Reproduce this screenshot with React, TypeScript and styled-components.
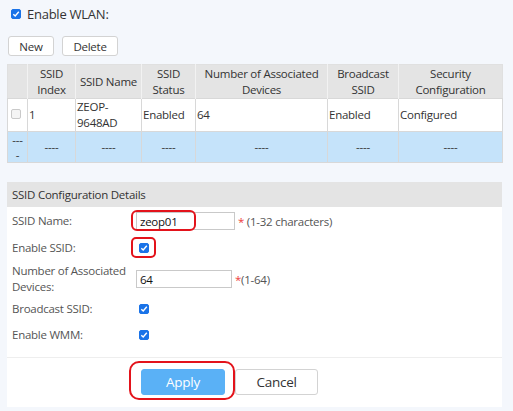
import React from "react";
import styled, { createGlobalStyle } from "styled-components";

const Global = createGlobalStyle`
  html, body { margin: 0; padding: 0; background: #f4f7fc; }
  body { font-family: "Open Sans", "Noto Sans", sans-serif; color: #333; letter-spacing: -0.25px; }
  * { box-sizing: border-box; }
`;

const Page = styled.div`
  width: 513px;
  height: 411px;
  padding: 0 11px 0 7px;
  overflow: hidden;
`;

const WlanRow = styled.label`
  display: flex;
  align-items: center;
  gap: 6px;
  height: 27px;
  padding: 0 0 0 4px;
  font-size: 13px;
  color: #333;
`;

const Box = styled.span<{ $on?: boolean }>`
  display: inline-flex;
  align-items: center;
  justify-content: center;
  flex: none;
  width: 10px;
  height: 10px;
  border-radius: 2px;
  background: ${(p) => (p.$on ? "#1a73e8" : "#f4f4f4")};
  border: 1px solid ${(p) => (p.$on ? "#1a73e8" : "#c9c9c9")};
`;

const Check = ({ on = true }: { on?: boolean }) => (
  <Box $on={on}>
    {on && (
      <svg width="8" height="8" viewBox="0 0 8 8">
        <path d="M1.3 4.2 L3.2 6 L6.8 1.8" fill="none" stroke="#fff" strokeWidth="1.4" />
      </svg>
    )}
  </Box>
);

const Toolbar = styled.div`
  display: flex;
  gap: 8px;
  padding: 9px 0 8px 1px;
`;

const SmallButton = styled.button<{ $w: number }>`
  width: ${(p) => p.$w}px;
  height: 20px;
  border: 1px solid #d3d3d3;
  border-radius: 3px;
  background: #fff;
  font-family: inherit;
  letter-spacing: inherit;
  font-size: 11.5px;
  color: #333;
  padding: 0;
`;

const Table = styled.table`
  width: 495px;
  border-collapse: collapse;
  table-layout: fixed;
  font-size: 11.5px;
  border: 1px solid #e0e0e0;
`;

const Th = styled.th`
  background: #e4e4e4;
  font-weight: normal;
  color: #333;
  height: 34px;
  padding: 0 2px;
  line-height: 16px;
  text-align: center;
  border-left: 1px solid #f2f2f2;
  &:first-child { border-left: none; }
`;

const Tr = styled.tr<{ $blank?: boolean }>`
  background: ${(p) => (p.$blank ? "#c5e3fa" : "#fff")};
  & > td {
    height: ${(p) => (p.$blank ? 31 : 30)}px;
    text-align: ${(p) => (p.$blank ? "center" : "left")};
  }
`;

const Td = styled.td`
  border: 1px solid #d8d8d8;
  padding: 0 1px;
  line-height: 16px;
  color: #333;
`;

const CheckCell = styled(Td)`
  padding-left: 3px;
`;

const NarrowCell = styled(Td)`
  padding: 0 3px;
  line-height: 15px;
  word-break: break-all;
`;

const Panel = styled.section`
  margin-top: 19px;
  width: 495px;
  background: #fff;
`;

const PanelHead = styled.div`
  height: 25px;
  background: #e4e4e4;
  display: flex;
  align-items: center;
  padding-left: 5px;
  font-size: 11.5px;
  color: #333;
`;

const Form = styled.div`
  display: flex;
  flex-direction: column;
  padding: 0 0 8px 5px;
`;

const Row = styled.div<{ $h: number }>`
  display: flex;
  align-items: center;
  height: ${(p) => p.$h}px;
`;

const Label = styled.div`
  width: 124px;
  flex: none;
  font-size: 11.5px;
  line-height: 16px;
  color: #555;
  padding-right: 8px;
`;

const Field = styled.div`
  position: relative;
  display: flex;
  align-items: center;
`;

const Input = styled.input<{ $w: number }>`
  width: ${(p) => p.$w}px;
  height: 18px;
  border: 1px solid #c9c9c9;
  padding: 0 3px;
  font-family: inherit;
  letter-spacing: inherit;
  font-size: 11.5px;
  color: #111;
  outline: none;
`;

const Hint = styled.span`
  font-size: 11.5px;
  color: #555;
  margin-left: 3px;
  white-space: pre;
`;

const Star = styled.span`
  color: #ee3b3b;
`;

const CheckSlot = styled.div`
  position: relative;
  padding-left: 3px;
  display: flex;
  align-items: center;
`;

// red emphasis frames drawn over the controls
const Ring = styled.span<{ $l: number; $t: number; $w: number; $h: number; $r: number }>`
  position: absolute;
  left: ${(p) => p.$l}px;
  top: ${(p) => p.$t}px;
  width: ${(p) => p.$w}px;
  height: ${(p) => p.$h}px;
  border: 2px solid #e3131b;
  border-radius: ${(p) => p.$r}px;
  pointer-events: none;
`;

const Divider = styled.div`
  height: 1px;
  background: #eeeeee;
`;

const Actions = styled.div`
  display: flex;
  gap: 10px;
  padding: 11px 0 12px 134px;
`;

const Btn = styled.button<{ $primary?: boolean }>`
  position: relative;
  width: ${(p) => (p.$primary ? 84 : 83)}px;
  height: 26px;
  border-radius: 3px;
  font-family: inherit;
  letter-spacing: inherit;
  font-size: 13.5px;
  padding: 0;
  border: 1px solid ${(p) => (p.$primary ? "#5ab1f6" : "#d3d3d3")};
  background: ${(p) => (p.$primary ? "#5ab1f6" : "#fff")};
  color: ${(p) => (p.$primary ? "#fff" : "#333")};
`;

const ApplyWrap = styled.div`
  position: relative;
`;

const cols = [20, 48, 66, 54, 132, 71, 104];

export default function App() {
  return (
    <Page>
      <Global />
      <WlanRow>
        <Check />
        Enable WLAN:
      </WlanRow>
      <Toolbar>
        <SmallButton $w={46}>New</SmallButton>
        <SmallButton $w={56}>Delete</SmallButton>
      </Toolbar>
      <Table>
        <colgroup>
          {cols.map((w, i) => (
            <col key={i} style={{ width: w }} />
          ))}
        </colgroup>
        <thead>
          <tr>
            <Th />
            <Th>SSID Index</Th>
            <Th>SSID Name</Th>
            <Th>SSID Status</Th>
            <Th>Number of Associated Devices</Th>
            <Th>Broadcast SSID</Th>
            <Th>Security Configuration</Th>
          </tr>
        </thead>
        <tbody>
          <Tr>
            <CheckCell>
              <Check on={false} />
            </CheckCell>
            <Td>1</Td>
            <Td>ZEOP-9648AD</Td>
            <Td>Enabled</Td>
            <Td>64</Td>
            <Td>Enabled</Td>
            <Td>Configured</Td>
          </Tr>
          <Tr $blank>
            <NarrowCell>----</NarrowCell>
            <Td>----</Td>
            <Td>----</Td>
            <Td>----</Td>
            <Td>----</Td>
            <Td>----</Td>
            <Td>----</Td>
          </Tr>
        </tbody>
      </Table>

      <Panel>
        <PanelHead>SSID Configuration Details</PanelHead>
        <Form>
          <Row $h={28}>
            <Label>SSID Name:</Label>
            <Field>
              <Input $w={99} defaultValue="zeop01" />
              <Ring $l={-5} $t={-2} $w={65} $h={21} $r={6} />
            </Field>
            <Hint>
              <Star>*</Star> (1-32 characters)
            </Hint>
          </Row>
          <Row $h={26}>
            <Label>Enable SSID:</Label>
            <CheckSlot>
              <Check />
              <Ring $l={-5} $t={-6} $w={25} $h={21} $r={5} />
            </CheckSlot>
          </Row>
          <Row $h={36}>
            <Label>Number of Associated Devices:</Label>
            <Field>
              <Input $w={96} defaultValue="64" />
            </Field>
            <Hint>
              <Star>*</Star>(1-64)
            </Hint>
          </Row>
          <Row $h={24}>
            <Label>Broadcast SSID:</Label>
            <CheckSlot>
              <Check />
            </CheckSlot>
          </Row>
          <Row $h={28}>
            <Label>Enable WMM:</Label>
            <CheckSlot>
              <Check />
            </CheckSlot>
          </Row>
        </Form>
        <Divider />
        <Actions>
          <ApplyWrap>
            <Btn $primary>Apply</Btn>
            <Ring $l={-12} $t={-8} $w={106} $h={39} $r={10} />
          </ApplyWrap>
          <Btn>Cancel</Btn>
        </Actions>
      </Panel>
    </Page>
  );
}
